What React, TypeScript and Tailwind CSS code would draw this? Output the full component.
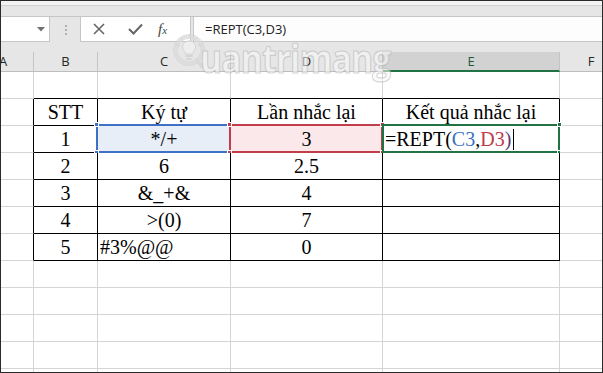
import React from "react";

const W = ["w-[33px]", "w-[64px]", "w-[133px]", "w-[152px]", "w-[177px]", "w-[62px]"];

type Row = (React.ReactNode | null)[];

const rows: Row[] = [
  [null, null, null, null, null, null],
  [null, "STT", "Ký tự", "Lần nhắc lại", "Kết quả nhắc lại", null],
  [null, "1", "*/+", "3", "F", null],
  [null, "2", "6", "2.5", null, null],
  [null, "3", "&_+&", "4", null, null],
  [null, "4", ">(0)", "7", null, null],
  [null, "5", "#3%@@", "0", null, null],
  [null, null, null, null, null, null],
  [null, null, null, null, null, null],
  [null, null, null, null, null, null],
  [null, null, null, null, null, null],
  [null, null, null, null, null, null],
];

function Formula() {
  return (
    <span className="whitespace-nowrap">
      =REPT(<span className="text-[#3b6fc4]">C3</span>,<span className="text-[#c1394b]">D3</span>
      <span className="text-[#5b3a74]">)</span>
      <span className="inline-block w-px h-[21px] bg-black align-[-4px] ml-[2px]" />
    </span>
  );
}

function Sq({ pos, color }: { pos: string; color: string }) {
  return <span className={`absolute w-[5px] h-[5px] border border-white ${pos} ${color}`} />;
}

function SheetCell({ r, c }: { r: number; c: number }) {
  const inTable = r >= 1 && r <= 6 && c >= 1 && c <= 4;
  const rightBlack = inTable || (c === 0 && r >= 1 && r <= 6);
  const bottomBlack = inTable || (r === 0 && c >= 1 && c <= 4);
  const v = rows[r][c];
  const isC3 = r === 2 && c === 2;
  const isD3 = r === 2 && c === 3;
  const isE3 = r === 2 && c === 4;
  const leftAlign = (r === 6 && c === 2) || isE3;
  let bg = "bg-white";
  if (isC3) bg = "bg-[#e8eef8]";
  if (isD3) bg = "bg-[#fbe8ea]";
  return (
    <div
      className={`relative shrink-0 h-[27px] border-r border-b ${W[c]} ${bg} ${
        rightBlack ? "border-r-black" : "border-r-[#d4d4d4]"
      } ${bottomBlack ? "border-b-black" : "border-b-[#d4d4d4]"} ${
        leftAlign ? "text-left pl-[2px]" : "text-center"
      } leading-[27px] text-[20px] text-black [font-family:'Liberation_Serif','Times_New_Roman',serif] whitespace-nowrap`}
    >
      {isE3 ? <Formula /> : v}
      {isC3 && (
        <div className="absolute -left-[2px] -top-[2px] -right-[1px] -bottom-[1px] border-2 border-[#3e70c6]">
          <Sq pos="-left-[4px] -top-[4px]" color="bg-[#3e70c6]" />
          <Sq pos="-left-[4px] -bottom-[4px]" color="bg-[#3e70c6]" />
        </div>
      )}
      {isD3 && (
        <div className="absolute -left-[2px] -top-[2px] -right-[1px] -bottom-[1px] border-2 border-[#c23d4b]">
          <Sq pos="-left-[4px] -top-[4px]" color="bg-[#c23d4b]" />
          <Sq pos="-left-[4px] -bottom-[4px]" color="bg-[#c23d4b]" />
          <Sq pos="-right-[4px] -top-[4px]" color="bg-[#c23d4b]" />
          <Sq pos="-right-[4px] -bottom-[4px]" color="bg-[#c23d4b]" />
        </div>
      )}
      {isE3 && (
        <div className="absolute -left-[1px] -top-[2px] -right-[1px] -bottom-[1px] border-2 border-[#217346]">
          <Sq pos="-right-[4px] -top-[4px]" color="bg-[#217346]" />
          <Sq pos="-right-[4px] -bottom-[4px]" color="bg-[#217346]" />
        </div>
      )}
    </div>
  );
}

function HeaderCell({ c, label }: { c: number; label: string }) {
  const active = c === 4;
  return (
    <div
      className={`relative shrink-0 h-[20px] border-r border-r-[#c4c4c4] overflow-hidden ${W[c]} ${
        active ? "bg-[#d2d2d2] border-b-2 border-b-[#217346] text-[#1f5a38]" : "bg-[#e6e6e6] border-b border-b-[#bdbdbd] text-[#262626]"
      } flex items-center justify-center text-[13px] [font-family:'Open_Sans','Segoe_UI',sans-serif]`}
    >
      {c === 0 ? (
        <div className="absolute left-[-29px] w-[62px] text-center top-0 leading-[19px]">{label}</div>
      ) : c === 5 ? (
        <div className="absolute left-0 w-[62px] text-center top-0 leading-[19px]">{label}</div>
      ) : (
        <span className={active ? "leading-[18px]" : "leading-[19px]"}>{label}</span>
      )}
    </div>
  );
}

function Watermark() {
  return (
    <div className="absolute left-0 top-0 pointer-events-none opacity-80">
      <svg className="absolute left-[170px] top-[28px]" width="38" height="42" viewBox="0 0 38 42">
        <circle cx="18" cy="21" r="13" fill="none" stroke="#dcdcdc" strokeWidth="4" />
        <circle cx="18" cy="21" r="15.5" fill="none" stroke="#cfcfcf" strokeWidth="0.8" />
        <path d="M26 31 L31 37" stroke="#d6d6d6" strokeWidth="4" strokeLinecap="round" />
        <path
          d="M18 12 C13 12 11.5 15.5 11.5 18 C11.5 21 14 22.5 14.5 25 L21.5 25 C22 22.5 24.5 21 24.5 18 C24.5 15.5 23 12 18 12 Z"
          fill="#f0f0f0"
          stroke="#d2d2d2"
          strokeWidth="1"
        />
        <rect x="14.5" y="26" width="7" height="2" fill="#d2d2d2" />
        <rect x="15.5" y="29" width="5" height="2" fill="#d2d2d2" />
        <path d="M18 6 L18 8 M10 9 L11.5 10.5 M26 9 L24.5 10.5 M6 16 L8 16.5 M30 16 L28 16.5" stroke="#d2d2d2" strokeWidth="1.5" strokeLinecap="round" />
      </svg>
      <span className="absolute left-[199px] top-[37px] whitespace-nowrap origin-left scale-x-[0.84] text-[40px] leading-[40px] font-bold tracking-[-1px] text-[rgba(250,250,250,0.7)] [-webkit-text-stroke:1.2px_rgba(170,170,170,0.6)] [font-family:'Open_Sans',sans-serif]">
        uantrimang
      </span>
    </div>
  );
}

export default function App() {
  const headers = ["A", "B", "C", "D", "E", "F"];
  return (
    <div className="relative w-[603px] h-[373px] border border-[#2b2b2b] overflow-hidden bg-white flex flex-col">
      <div className="h-[5px] shrink-0 bg-[#f3f3f3] border-b border-[#d2d2d2]" />
      <div className="h-[11px] shrink-0 bg-[#e6e6e6] border-b border-[#c6c6c6]" />
      <div className="h-[35px] shrink-0 bg-[#e6e6e6] flex items-start">
        <div className="w-[49px] h-[25px] bg-white border-r border-b border-[#c6c6c6] relative">
          <svg className="absolute left-[36px] top-[10px]" width="8" height="5" viewBox="0 0 8 5">
            <path d="M0 0 H8 L4 4.5 Z" fill="#707070" />
          </svg>
        </div>
        <div className="w-[30px] h-[25px] flex flex-col items-center justify-center gap-[2px] pl-[1px]">
          <span className="w-[2px] h-[2px] bg-[#b0b0b0]" />
          <span className="w-[2px] h-[2px] bg-[#b0b0b0]" />
          <span className="w-[2px] h-[2px] bg-[#b0b0b0]" />
        </div>
        <div className="w-[111px] h-[25px] bg-white border-x border-b border-[#c6c6c6] flex items-center">
          <svg className="ml-[12px]" width="12" height="12" viewBox="0 0 12 12">
            <path d="M1 1 L11 11 M11 1 L1 11" stroke="#666" strokeWidth="1.6" />
          </svg>
          <svg className="ml-[23px]" width="15" height="12" viewBox="0 0 15 12">
            <path d="M1 6 L5.5 10.5 L14 1.5" stroke="#666" strokeWidth="2" fill="none" />
          </svg>
          <span className="ml-[15px] italic text-[#444] text-[15px] leading-none [font-family:'Liberation_Serif',serif]">
            f<span className="text-[11px]">x</span>
          </span>
        </div>
        <div className="w-[2px]" />
        <div className="flex-1 h-[25px] bg-[#fdfdfd] border-l border-b border-[#c6c6c6] pl-[11px] text-[13px] leading-[24px] text-[#222] [font-family:'Open_Sans','Segoe_UI',sans-serif]">
          =REPT(C3,D3)
        </div>
      </div>
      <div className="flex shrink-0">
        {headers.map((h, c) => (
          <HeaderCell key={h} c={c} label={h} />
        ))}
      </div>
      {rows.map((row, r) => (
        <div key={r} className="flex shrink-0">
          {row.map((_, c) => (
            <SheetCell key={c} r={r} c={c} />
          ))}
        </div>
      ))}
      <Watermark />
    </div>
  );
}
